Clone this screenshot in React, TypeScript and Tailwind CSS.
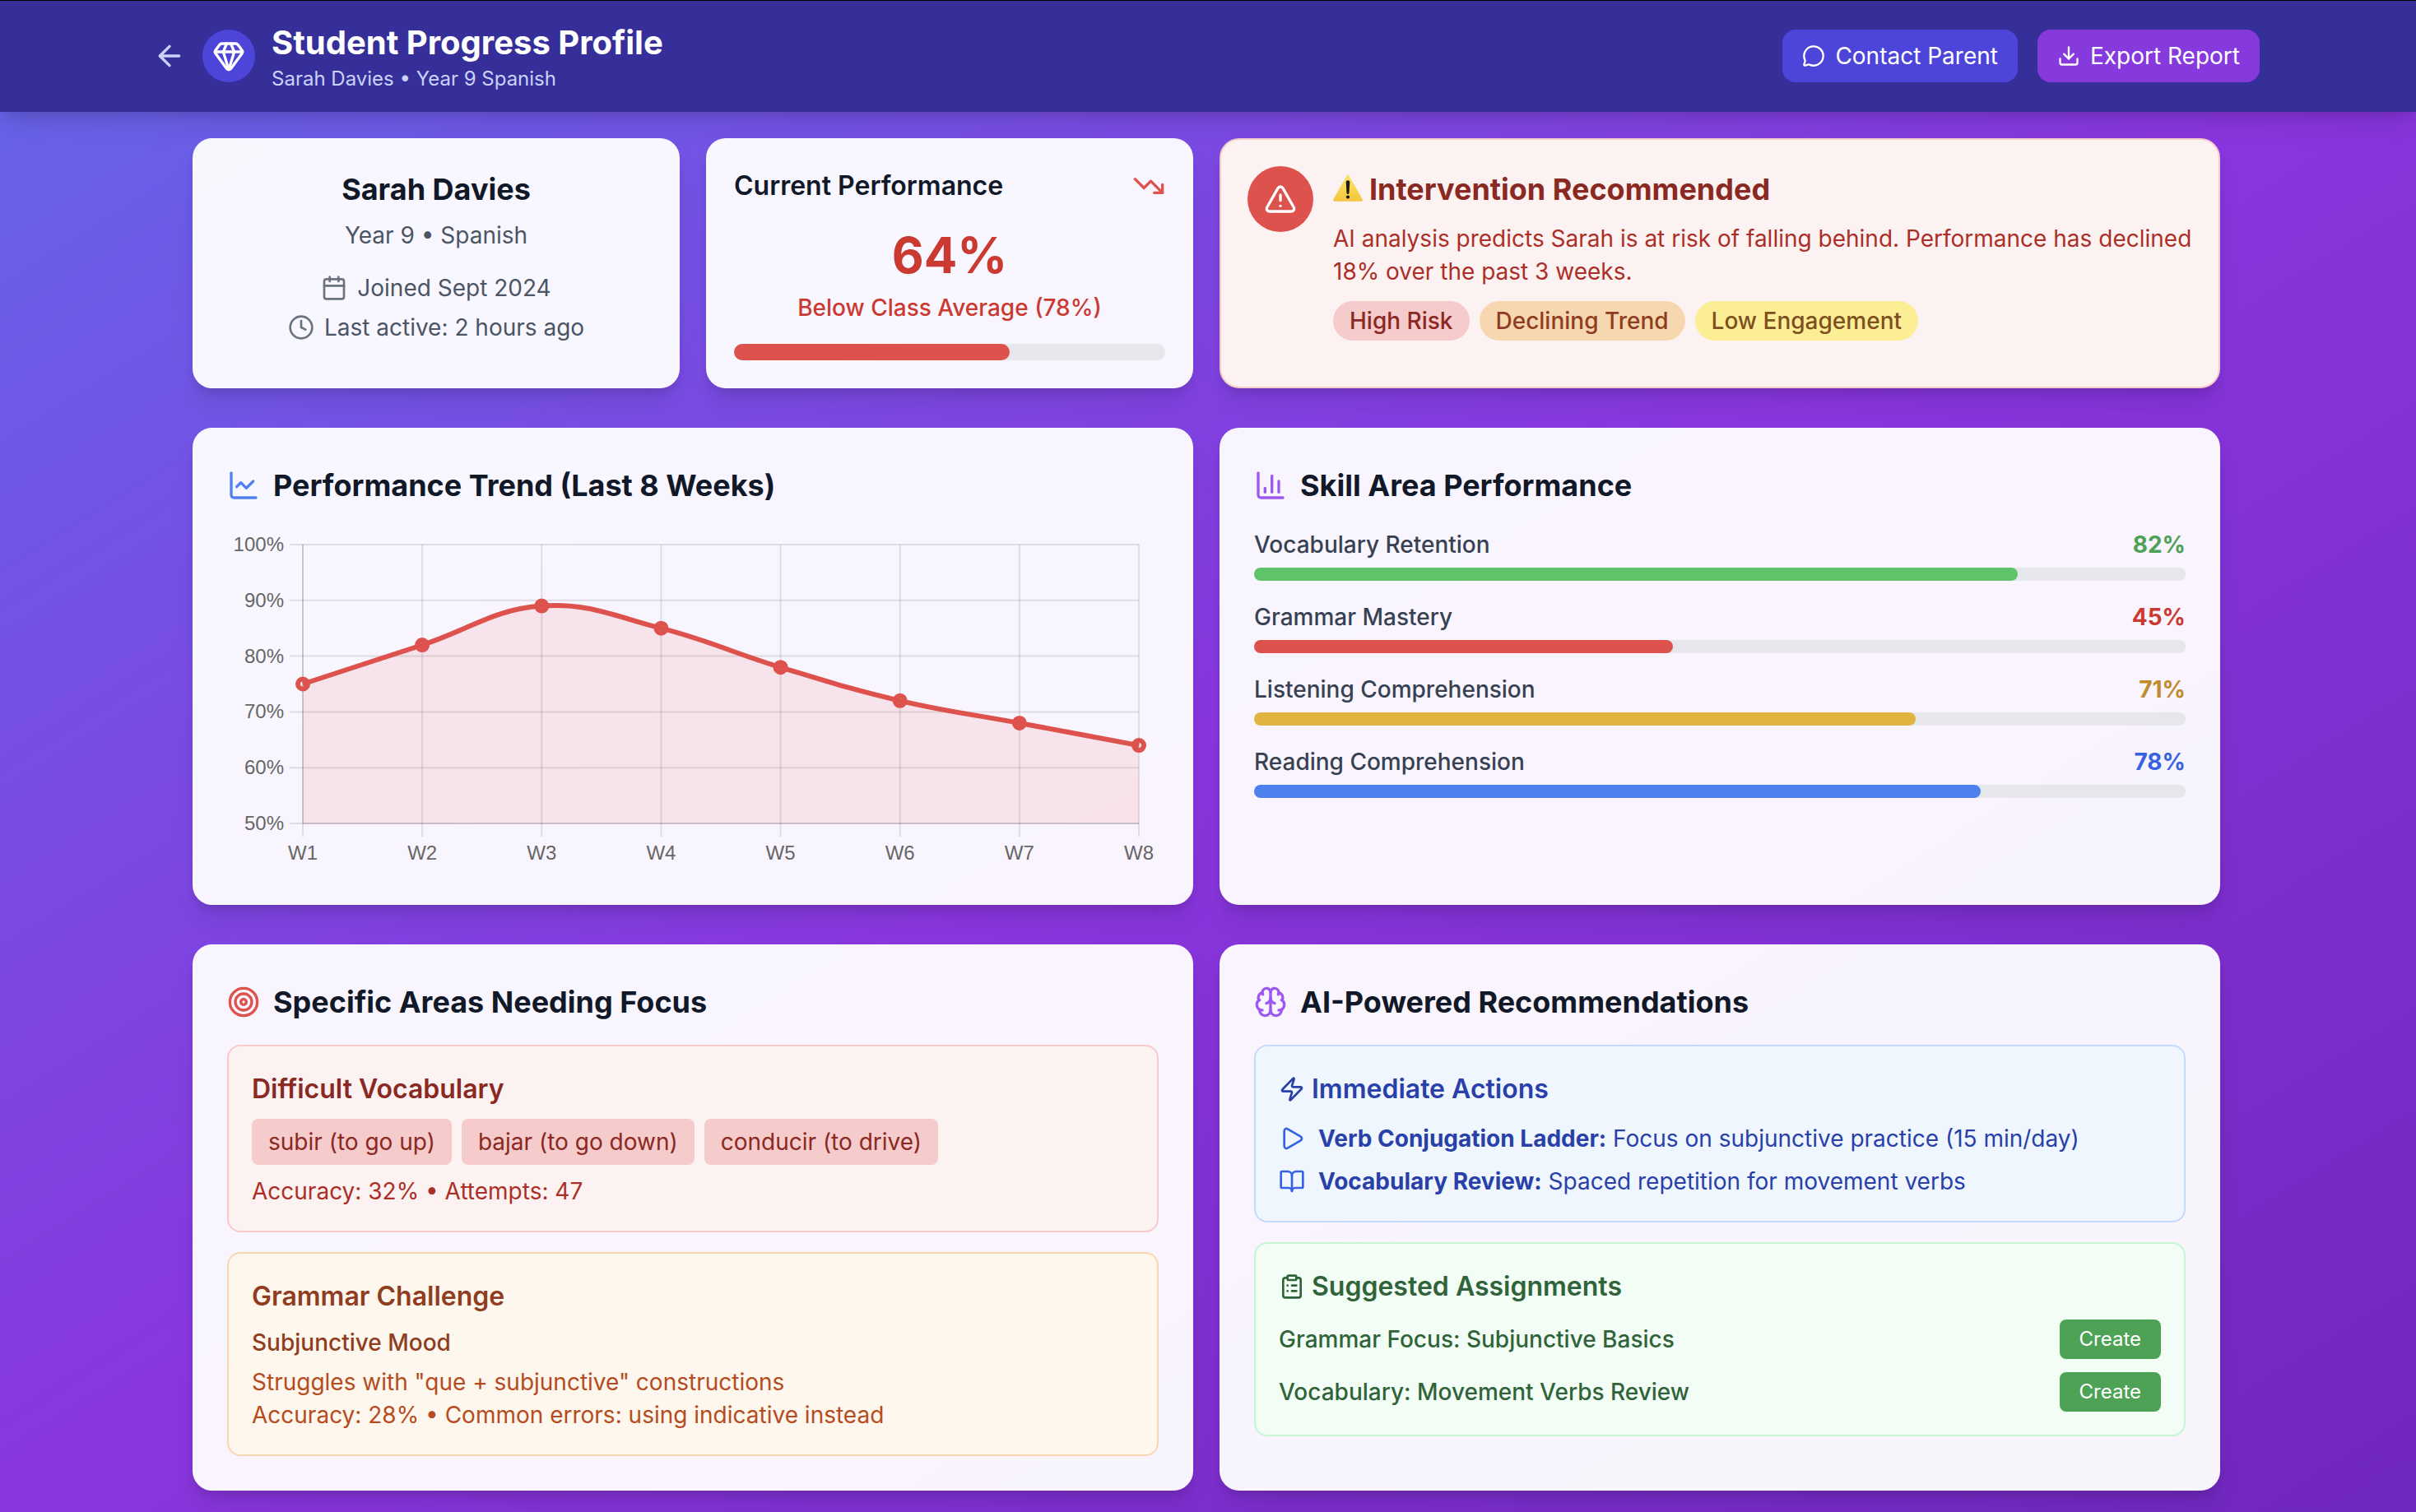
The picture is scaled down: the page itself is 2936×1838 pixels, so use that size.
import {
  ArrowLeft,
  BookOpen,
  Brain,
  Calendar,
  ChartColumn,
  ChartLine,
  ClipboardList,
  Clock,
  Download,
  Gem,
  MessageCircle,
  Play,
  Target,
  TrendingDown,
  TriangleAlert,
  Zap,
} from "lucide-react";
import type { ReactNode } from "react";

const card =
  "rounded-3xl border-2 border-white/20 bg-white/95 shadow-[0_20px_30px_-6px_rgba(0,0,0,0.1),0_8px_12px_-4px_rgba(0,0,0,0.1)]";

const skills = [
  { name: "Vocabulary Retention", value: 82, bar: "bg-[#5fc36a]", text: "text-[#4da256]" },
  { name: "Grammar Mastery", value: 45, bar: "bg-[#dd524c]", text: "text-[#ca3a31]" },
  { name: "Listening Comprehension", value: 71, bar: "bg-[#e0b43e]", text: "text-[#c08b2c]" },
  { name: "Reading Comprehension", value: 78, bar: "bg-[#4e80ee]", text: "text-[#3662e3]" },
];

const weeks = [75, 82, 89, 85, 78, 72, 68, 64];

/* Plot area inside the 1132 x 416 chart drawing */
const plot = { left: 92, right: 1108, top: 20, bottom: 359 };

function TrendChart() {
  const step = (plot.right - plot.left) / (weeks.length - 1);
  const yOf = (v: number) => plot.bottom - ((v - 50) / 50) * (plot.bottom - plot.top);
  const pts = weeks.map((v, i) => ({ x: plot.left + i * step, y: yOf(v) }));

  /* Cardinal spline with tension 0.4 */
  const ctrl = pts.map((p, i) => {
    const a = pts[Math.max(i - 1, 0)];
    const b = pts[Math.min(i + 1, pts.length - 1)];
    const d1 = Math.hypot(p.x - a.x, p.y - a.y);
    const d2 = Math.hypot(b.x - p.x, b.y - p.y);
    const f1 = (0.4 * d1) / (d1 + d2);
    const f2 = (0.4 * d2) / (d1 + d2);
    return {
      px: p.x - f1 * (b.x - a.x),
      py: p.y - f1 * (b.y - a.y),
      nx: p.x + f2 * (b.x - a.x),
      ny: p.y + f2 * (b.y - a.y),
    };
  });
  const line = pts
    .map((p, i) =>
      i === 0
        ? `M${p.x} ${p.y}`
        : `C${ctrl[i - 1].nx} ${ctrl[i - 1].ny} ${ctrl[i].px} ${ctrl[i].py} ${p.x} ${p.y}`,
    )
    .join(" ");

  return (
    <svg viewBox="0 0 1132 416" className="w-full" role="img" aria-label="Performance over the last 8 weeks">
      <g stroke="#000" strokeOpacity="0.1" strokeWidth="2">
        {pts.map((p, i) => (
          <line key={i} x1={p.x} x2={p.x} y1={plot.top} y2={plot.bottom + 16} />
        ))}
        {[50, 60, 70, 80, 90, 100].map((v) => (
          <line key={v} x1={plot.left - 16} x2={plot.right} y1={yOf(v)} y2={yOf(v)} />
        ))}
        <line x1={plot.left} x2={plot.left} y1={plot.top} y2={plot.bottom} />
        <line x1={plot.left} x2={plot.right} y1={plot.bottom} y2={plot.bottom} />
      </g>
      <path d={`${line} L${plot.right} ${plot.bottom} L${plot.left} ${plot.bottom} Z`} fill="#ef4444" fillOpacity="0.1" />
      <path d={line} fill="none" stroke="#dd524c" strokeWidth="6" />
      {pts.map((p, i) => (
        <circle key={i} cx={p.x} cy={p.y} r="6" fill="#ef4444" fillOpacity="0.1" stroke="#dd524c" strokeWidth="6" />
      ))}
      <g fill="#666" fontSize="24" className="font-['Liberation_Sans',sans-serif]">
        {[50, 60, 70, 80, 90, 100].map((v) => (
          <text key={v} x={plot.left - 23} y={yOf(v) + 8} textAnchor="end">
            {v}%
          </text>
        ))}
        {pts.map((p, i) => (
          <text key={i} x={p.x} y="403" textAnchor="middle">
            W{i + 1}
          </text>
        ))}
      </g>
    </svg>
  );
}

function WarningSign() {
  return (
    <svg viewBox="0 0 36 36" className="size-9" aria-hidden="true">
      <defs>
        <linearGradient id="sign" x1="0" y1="0" x2="0" y2="1">
          <stop offset="0" stopColor="#f9e27a" />
          <stop offset="0.5" stopColor="#f8d74f" />
          <stop offset="1" stopColor="#f3c540" />
        </linearGradient>
      </defs>
      <path d="M16.6 1.600q1.400-2 2.800 0l16.300 28.600q1 2.400-1.300 2.600H1.600q-2.300-.2-1.300-2.600z" fill="url(#sign)" />
      <path d="M15.700 9.500q0-2.200 2.300-2.200t2.300 2.200l-.8 13q-.2 1.500-1.500 1.500t-1.500-1.500z" fill="#1d1a10" />
      <circle cx="18" cy="27.500" r="2.100" fill="#1d1a10" />
    </svg>
  );
}

function PanelTitle({ icon, children }: { icon: ReactNode; children: ReactNode }) {
  return (
    <h2 className="mb-6 flex items-center gap-4 text-[36px] leading-14 font-bold text-[#111827]">
      {icon}
      {children}
    </h2>
  );
}

export default function App() {
  return (
    <div className="min-h-screen bg-linear-to-br/srgb from-[#6466e9] via-[#8936de] to-[#7027bd] font-['Inter',sans-serif] text-[28px] leading-10">
      <header className="border-t border-black bg-[#362f9a] pt-[35px] pr-1 pb-9 shadow-[0_20px_30px_-6px_rgba(0,0,0,0.1),0_8px_12px_-4px_rgba(0,0,0,0.1)]">
        <div className="mx-auto flex max-w-[2560px] items-center justify-between">
          <div className="flex h-16 items-center gap-5">
            <button type="button" aria-label="Back" className="text-[#c9d2fb]">
              <ArrowLeft className="size-10" />
            </button>
            <div className="flex size-16 items-center justify-center rounded-full bg-[#4d45da] text-white">
              <Gem className="size-10" />
            </div>
            <div>
              <h1 className="text-[40px] leading-[56px] font-bold text-white">Student Progress Profile</h1>
              <p className="text-2xl leading-8 text-[#c9d2fb]">Sarah Davies • Year 9 Spanish</p>
            </div>
          </div>
          <div className="flex gap-6 text-white">
            <button type="button" className="flex items-center gap-3 rounded-2xl bg-[#4d45da] px-6 py-3">
              <MessageCircle className="size-7" />
              Contact Parent
            </button>
            <button type="button" className="flex items-center gap-3 rounded-2xl bg-[#8639dd] px-6 py-3">
              <Download className="size-7" />
              Export Report
            </button>
          </div>
        </div>
      </header>

      <main className="pr-1">
        <div className="mx-auto flex max-w-[2560px] flex-col gap-12 px-12 pt-8 pb-6">
          <div className="grid grid-cols-4 gap-8">
            <section className={`${card} p-8 text-center text-[#4b5563]`}>
              <h2 className="mb-2 text-[36px] leading-14 font-bold text-[#111827]">Sarah Davies</h2>
              <p className="mb-6">Year 9 • Spanish</p>
              <div className="flex flex-col gap-2">
                <p className="flex items-center justify-center gap-3">
                  <Calendar className="size-8 text-[#6b7280]" />
                  Joined Sept 2024
                </p>
                <p className="flex items-center justify-center gap-3">
                  <Clock className="size-8 text-[#6b7280]" />
                  Last active: 2 hours ago
                </p>
              </div>
            </section>

            <section className={`${card} p-8`}>
              <div className="mb-6 flex items-center justify-between">
                <h2 className="text-[32px] leading-12 font-semibold text-[#111827]">Current Performance</h2>
                <TrendingDown className="size-10 text-[#dd524c]" />
              </div>
              <div className="text-center text-[#ca3a31]">
                <p className="mb-2 text-6xl leading-[72px] font-bold">64%</p>
                <p className="mb-6 font-medium">Below Class Average (78%)</p>
              </div>
              <div className="h-5 rounded-full bg-[#e5e7eb]">
                <div className="h-full w-[64%] rounded-full bg-[#dd524c]" />
              </div>
            </section>

            <section className="col-span-2 flex items-start gap-6 rounded-3xl border-2 border-[#f5caca] bg-[#fcf2f2] p-8 shadow-[0_20px_30px_-6px_rgba(0,0,0,0.1),0_8px_12px_-4px_rgba(0,0,0,0.1)]">
              <div className="flex size-20 shrink-0 items-center justify-center rounded-full bg-[#dd524c] text-white">
                <TriangleAlert className="size-10" />
              </div>
              <div className="min-w-0 flex-1">
                <h2 className="mb-3 flex items-center gap-2 text-[36px] leading-14 font-bold text-[#8a2822]">
                  <WarningSign />
                  Intervention Recommended
                </h2>
                <p className="mb-4 text-[#ab2f27]">
                  AI analysis predicts Sarah is at risk of falling behind. Performance has declined 18% over the past 3
                  weeks.
                </p>
                <div className="flex gap-3 font-medium">
                  <span className="rounded-full bg-[#f5cbcb] px-5 py-1 text-[#8a2822]">High Risk</span>
                  <span className="rounded-full bg-[#f7d7b0] px-5 py-1 text-[#8f3d1e]">Declining Trend</span>
                  <span className="rounded-full bg-[#fbee95] px-5 py-1 text-[#7e501f]">Low Engagement</span>
                </div>
              </div>
            </section>
          </div>

          <div className="grid grid-cols-2 gap-8">
            <section className={`${card} p-10`}>
              <PanelTitle icon={<ChartLine className="size-10 text-[#4e80ee]" />}>
                Performance Trend (Last 8 Weeks)
              </PanelTitle>
              <TrendChart />
            </section>

            <section className={`${card} p-10`}>
              <PanelTitle icon={<ChartColumn className="size-10 text-[#9d58f0]" />}>Skill Area Performance</PanelTitle>
              <ul className="flex flex-col gap-6">
                {skills.map((s) => (
                  <li key={s.name}>
                    <div className="mb-2 flex justify-between">
                      <span className="font-medium text-[#374151]">{s.name}</span>
                      <span className={`font-bold ${s.text}`}>{s.value}%</span>
                    </div>
                    <div className="h-4 rounded-full bg-[#e5e7eb]">
                      <div className={`h-full rounded-full ${s.bar}`} style={{ width: `${s.value}%` }} />
                    </div>
                  </li>
                ))}
              </ul>
            </section>
          </div>

          <div className="grid grid-cols-2 gap-8">
            <section className={`${card} p-10`}>
              <PanelTitle icon={<Target className="size-10 text-[#dd524c]" />}>Specific Areas Needing Focus</PanelTitle>
              <div className="flex flex-col gap-6">
                <div className="rounded-2xl border-2 border-[#f5caca] bg-[#fcf2f2] p-7">
                  <h3 className="mb-3 text-[32px] leading-12 font-semibold text-[#8a2822]">Difficult Vocabulary</h3>
                  <div className="mb-3 flex gap-3 text-[#8a2822]">
                    <span className="rounded-lg bg-[#f5cbcb] px-5 py-2">subir (to go up)</span>
                    <span className="rounded-lg bg-[#f5cbcb] px-5 py-2">bajar (to go down)</span>
                    <span className="rounded-lg bg-[#f5cbcb] px-5 py-2">conducir (to drive)</span>
                  </div>
                  <p className="text-[#ab2f27]">Accuracy: 32% • Attempts: 47</p>
                </div>
                <div className="rounded-2xl border-2 border-[#f7d7b0] bg-[#fef7ee] p-7">
                  <h3 className="mb-3 text-[32px] leading-12 font-semibold text-[#8f3d1e]">Grammar Challenge</h3>
                  <p className="mb-2 font-medium text-[#8f3d1e]">Subjunctive Mood</p>
                  <p className="text-[#b54b21]">Struggles with "que + subjunctive" constructions</p>
                  <p className="text-[#b54b21]">Accuracy: 28% • Common errors: using indicative instead</p>
                </div>
              </div>
            </section>

            <section className={`${card} p-10`}>
              <PanelTitle icon={<Brain className="size-10 text-[#9d58f0]" />}>AI-Powered Recommendations</PanelTitle>
              <div className="flex flex-col gap-6">
                <div className="rounded-2xl border-2 border-[#c4dafb] bg-[#eff6fe] p-7 text-[#2840a8]">
                  <h3 className="mb-4 flex items-center gap-2 text-[32px] leading-12 font-semibold">
                    <Zap className="size-8" />
                    Immediate Actions
                  </h3>
                  <ul className="flex flex-col gap-3">
                    <li className="flex items-center gap-4">
                      <Play className="size-8 text-[#3662e3]" />
                      <span>
                        <strong>Verb Conjugation Ladder:</strong> Focus on subjunctive practice (15 min/day)
                      </span>
                    </li>
                    <li className="flex items-center gap-4">
                      <BookOpen className="size-8 text-[#3662e3]" />
                      <span>
                        <strong>Vocabulary Review:</strong> Spaced repetition for movement verbs
                      </span>
                    </li>
                  </ul>
                </div>
                <div className="rounded-2xl border-2 border-[#c6f5d3] bg-[#f2fdf5] p-7 text-[#306339]">
                  <h3 className="mb-4 flex items-center gap-2 text-[32px] leading-12 font-semibold">
                    <ClipboardList className="size-8" />
                    Suggested Assignments
                  </h3>
                  <ul className="flex flex-col gap-4">
                    {["Grammar Focus: Subjunctive Basics", "Vocabulary: Movement Verbs Review"].map((t) => (
                      <li key={t} className="flex items-center justify-between">
                        <span className="font-medium">{t}</span>
                        <button type="button" className="rounded-lg bg-[#4da256] px-6 py-2 text-2xl leading-8 text-white">
                          Create
                        </button>
                      </li>
                    ))}
                  </ul>
                </div>
              </div>
            </section>
          </div>
        </div>
      </main>
    </div>
  );
}
